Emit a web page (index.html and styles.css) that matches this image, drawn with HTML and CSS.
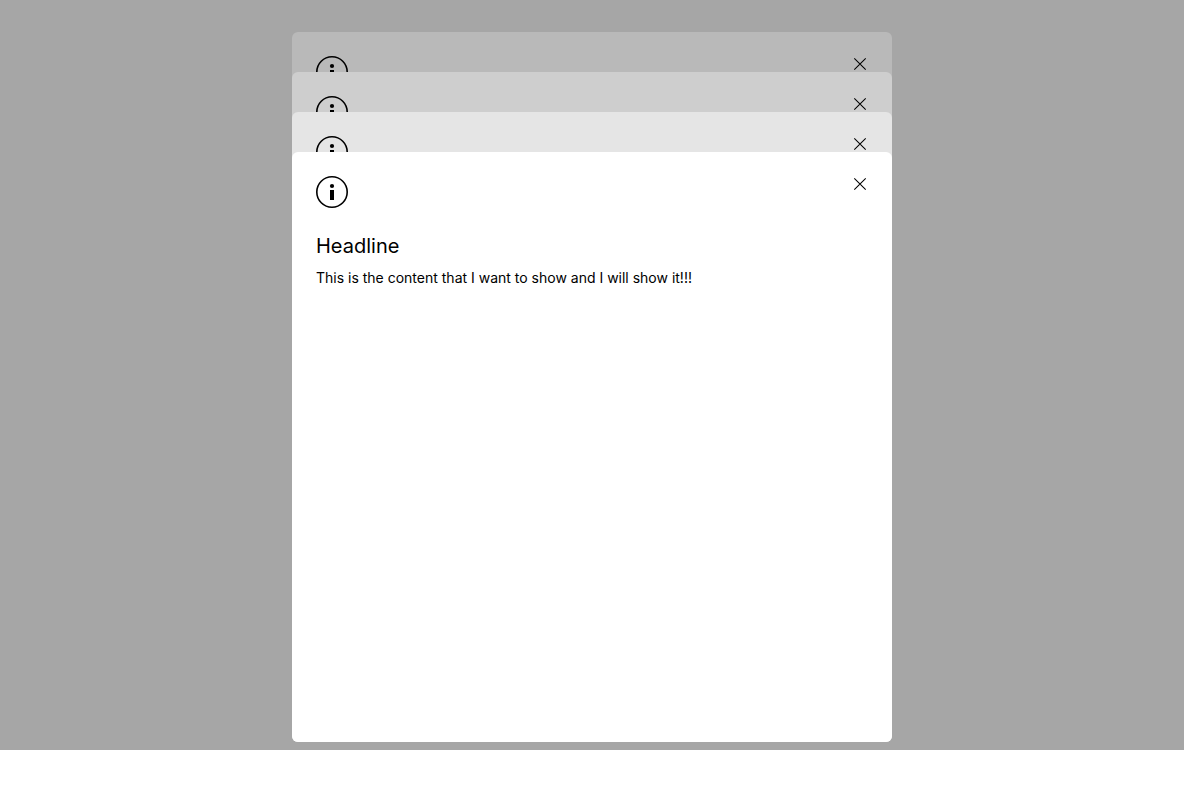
FILE: index.html
```html
<!DOCTYPE html>
<html lang="en">
<head>
<meta charset="utf-8">
<meta name="viewport" content="width=device-width, initial-scale=1">
<title>Stacked modals</title>
<link rel="stylesheet" href="styles.css">
</head>
<body>
<svg class="sprite" aria-hidden="true">
  <symbol id="icon-info" viewBox="0 0 32 32">
    <circle cx="16" cy="16" r="15.2" fill="none" stroke="currentColor" stroke-width="1.6"/>
    <circle cx="16" cy="10" r="2.1" fill="currentColor"/>
    <path d="M14 14h4v10h-4z" fill="currentColor"/>
  </symbol>
  <symbol id="icon-close" viewBox="0 0 16 16">
    <path d="M2.3 2.3l11.4 11.4M13.7 2.3L2.3 13.7" fill="none" stroke="currentColor" stroke-width="1.05"/>
  </symbol>
</svg>
<main class="overlay">
  <section class="sheet sheet-fourth">
    <header class="sheet-bar">
      <svg class="info"><use href="#icon-info"/></svg>
      <button class="close" type="button" aria-label="Close"><svg class="cross"><use href="#icon-close"/></svg></button>
    </header>
  </section>
  <section class="sheet sheet-third">
    <header class="sheet-bar">
      <svg class="info"><use href="#icon-info"/></svg>
      <button class="close" type="button" aria-label="Close"><svg class="cross"><use href="#icon-close"/></svg></button>
    </header>
  </section>
  <section class="sheet sheet-second">
    <header class="sheet-bar">
      <svg class="info"><use href="#icon-info"/></svg>
      <button class="close" type="button" aria-label="Close"><svg class="cross"><use href="#icon-close"/></svg></button>
    </header>
  </section>
  <section class="sheet sheet-front" role="dialog" aria-labelledby="headline">
    <header class="sheet-bar">
      <svg class="info"><use href="#icon-info"/></svg>
      <button class="close" type="button" aria-label="Close"><svg class="cross"><use href="#icon-close"/></svg></button>
    </header>
    <h1 class="headline" id="headline">Headline</h1>
    <p class="copy">This is the content that I want to show and I will show it!!!</p>
  </section>
</main>
</body>
</html>
```

FILE: styles.css
```css
* {
  box-sizing: border-box;
}

body {
  margin: 0;
  background: #fff;
  color: #000;
  font-family: Inter, "Liberation Sans", sans-serif;
}

.sprite {
  display: none;
}

.overlay {
  display: grid;
  grid-template-columns: minmax(0, 600px);
  grid-template-rows: 40px 40px 40px 1fr;
  justify-content: center;
  min-height: calc(100vh - 50px);
  padding: 32px 16px 8px;
  background: #a6a6a6;
}

.sheet {
  grid-column: 1;
  padding: 24px;
  border-radius: 6px;
}

.sheet-fourth {
  grid-row: 1 / 5;
  background: #b9b9b9;
}

.sheet-third {
  grid-row: 2 / 5;
  background: #cecece;
}

.sheet-second {
  grid-row: 3 / 5;
  background: #e5e5e5;
}

.sheet-front {
  grid-row: 4;
  background: #fff;
}

.sheet-bar {
  display: flex;
  justify-content: space-between;
  align-items: flex-start;
}

.info {
  width: 32px;
  height: 32px;
}

.close {
  display: flex;
  padding: 0;
  border: 0;
  background: none;
  color: inherit;
  cursor: pointer;
}

.cross {
  width: 16px;
  height: 16px;
}

.headline {
  margin: 24px 0 8px;
  font-size: 20px;
  font-weight: 400;
  line-height: 28px;
}

.copy {
  margin: 0;
  font-size: 14px;
  line-height: 20px;
}
```
